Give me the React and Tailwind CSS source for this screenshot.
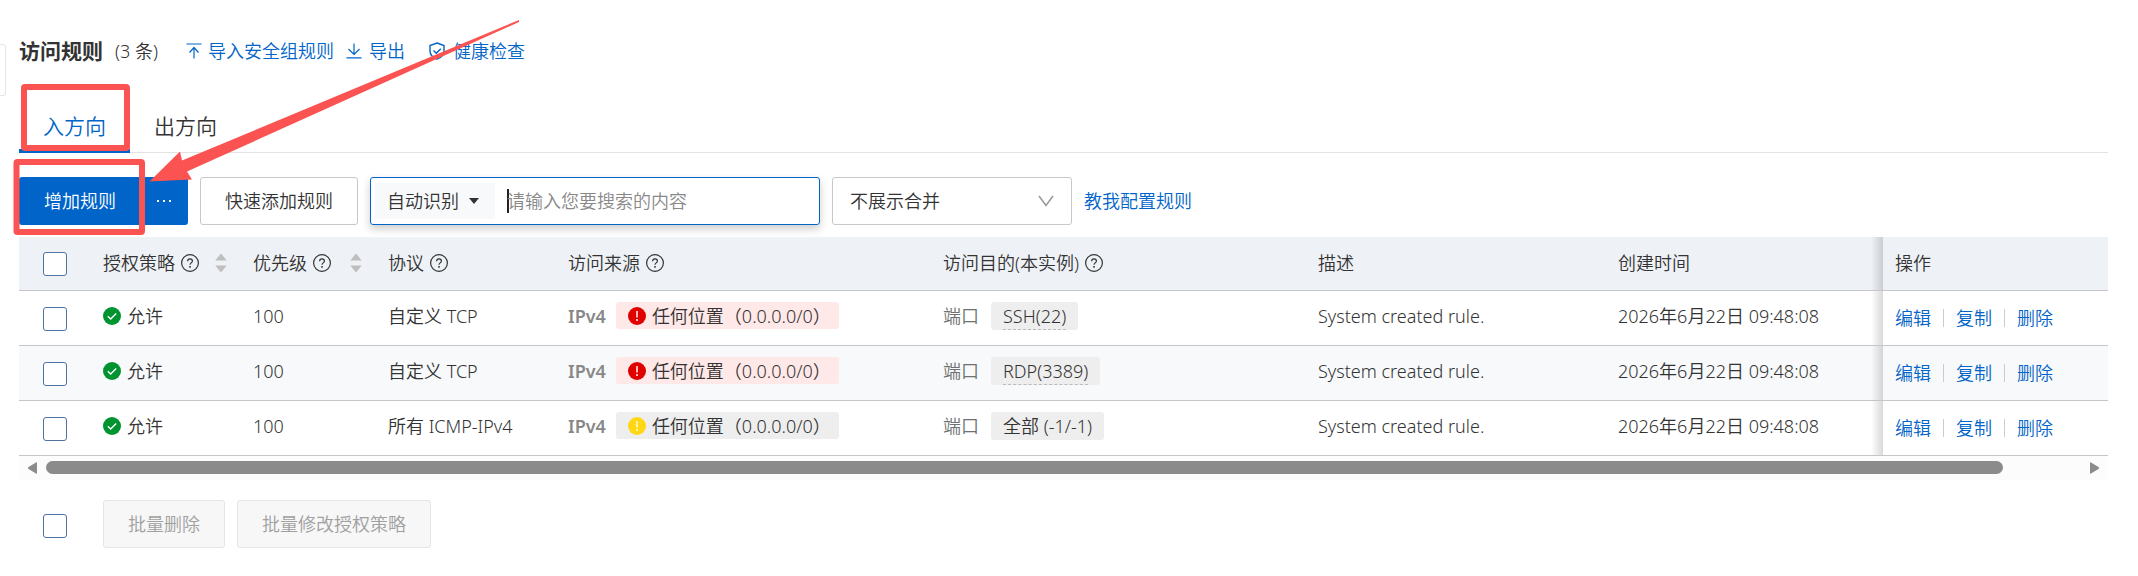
import React, { useState } from 'react';

const rules = [
  { id: 1, protocol: '自定义 TCP', level: 'danger', port: 'SSH(22)', hint: true },
  { id: 2, protocol: '自定义 TCP', level: 'danger', port: 'RDP(3389)', hint: true },
  { id: 3, protocol: '所有 ICMP-IPv4', level: 'warning', port: '全部 (-1/-1)', hint: false },
];

const UploadIcon = () => (
  <svg className="w-4 h-4" viewBox="0 0 16 16" fill="none" stroke="currentColor" strokeWidth="1.2">
    <path d="M0.5 1h15M8 15.500V4.500M3.500 9.500L8 4.500l4.500 5" />
  </svg>
);

const DownloadIcon = () => (
  <svg className="w-4 h-4" viewBox="0 0 16 16" fill="none" stroke="currentColor" strokeWidth="1.2">
    <path d="M0.5 14.800h15M8 0.500v11M2.500 6l5.500 5.500L13.500 6" />
  </svg>
);

const ShieldIcon = () => (
  <svg className="w-4 h-[18px]" viewBox="0 0 16 18" fill="none" stroke="currentColor" strokeWidth="1.4">
    <path d="M8 1L15 3.500V9c0 3.800-2.800 6.600-7 8.200C3.800 15.600 1 12.800 1 9V3.500L8 1z" />
    <path d="M4.500 8.500l2.800 2.800 4.500-4.500" />
  </svg>
);

const HelpIcon = () => (
  <svg className="w-[18px] h-[18px]" viewBox="0 0 18 18" fill="none" stroke="currentColor" strokeWidth="1.2">
    <circle cx="9" cy="9" r="8.400" />
    <path d="M6.600 7.200c0-1.500 1-2.400 2.400-2.400s2.400 0.900 2.400 2.200c0 1.800-2.400 1.900-2.400 3.700" />
    <path d="M9 12v1.700" strokeWidth="1.500" />
  </svg>
);

const SortIcon = () => (
  <svg className="w-3 h-5" viewBox="0 0 12 20" fill="#bfbfbf">
    <path d="M6 0.500L11.800 7.500H0.200zM6 19.500L0.200 12.500h11.600z" />
  </svg>
);

const CheckIcon = () => (
  <svg className="w-[18px] h-[18px]" viewBox="0 0 18 18" fill="none">
    <circle cx="9" cy="9" r="9" fill="#009431" />
    <path d="M4.800 9.200l2.900 2.900 5.500-5.500" stroke="#fff" strokeWidth="1.400" />
  </svg>
);

const AlertIcon = ({ level }) => (
  <svg className="w-[18px] h-[18px]" viewBox="0 0 18 18">
    <circle cx="9" cy="9" r="9" fill={level === 'danger' ? '#e00000' : '#ffd715'} />
    <path d="M8 4h2v6.500H8zM8 12h2v2H8z" fill={level === 'danger' ? '#ffb8b8' : '#fff1a8'} />
  </svg>
);

const Checkbox = ({ label }) => (
  <input
    type="checkbox"
    aria-label={label}
    className="block w-6 h-6 appearance-none rounded-[3px] border border-[#4f73a0] bg-white checked:bg-[#0064c8]"
  />
);

const HeadCell = ({ children, help, sort }) => (
  <th className="px-3 font-[350] text-left">
    <div className="flex items-center whitespace-nowrap">
      <span>{children}</span>
      {help && (
        <span className="ml-1.5">
          <HelpIcon />
        </span>
      )}
      {sort && (
        <button type="button" aria-label="排序" className="ml-auto mr-0.5">
          <SortIcon />
        </button>
      )}
    </div>
  </th>
);

const Header = () => (
  <div className="flex items-center h-6 text-[#0064c8]">
    <h2 className="text-[21px] font-bold text-[#333]">访问规则</h2>
    <span className="ml-3 text-[#333]">(3 条)</span>
    <a href="#import" className="ml-7 flex items-center gap-1.5">
      <UploadIcon />
      导入安全组规则
    </a>
    <a href="#export" className="ml-3 flex items-center gap-1.5">
      <DownloadIcon />
      <span className="pl-px">导出</span>
    </a>
    <a href="#health" className="ml-6 flex items-center gap-2">
      <ShieldIcon />
      健康检查
    </a>
  </div>
);

const Tabs = ({ active, onChange }) => (
  <div role="tablist" className="mt-9 flex border-b border-[#e3e3e3] text-[21px]">
    {['入方向', '出方向'].map((name) => (
      <button
        key={name}
        type="button"
        role="tab"
        aria-selected={active === name}
        onClick={() => onChange(name)}
        className={
          active === name
            ? '-mb-px h-[54px] px-6 pt-1 border-b-4 border-[#0064c8] text-[#0064c8]'
            : '-mb-px h-[54px] px-6 pt-1 border-b-4 border-transparent text-[#333]'
        }
      >
        {name}
      </button>
    ))}
  </div>
);

const Toolbar = () => (
  <div className="mt-6 flex items-center gap-3">
    <div className="flex h-12 rounded-[3px] bg-[#0064c8] text-white">
      <button type="button" className="pl-[25px] pr-6">
        增加规则
      </button>
      <button type="button" aria-label="更多" className="w-12 flex items-center justify-center">
        <svg className="w-4 h-1" viewBox="0 0 16 4" fill="currentColor">
          <path d="M1 1h2v2H1zM7 1h2v2H7zM13 1h2v2h-2z" />
        </svg>
      </button>
    </div>
    <button type="button" className="h-12 px-6 rounded-[3px] border border-[#c8c8c8]">
      快速添加规则
    </button>
    <div className="flex items-center w-[450px] h-12 p-1 rounded-[3px] border border-[#0064c8] shadow-[0_4px_8px_rgba(0,0,0,0.2)]">
      <button type="button" className="flex items-center justify-between w-[120px] h-9 pl-3 pr-4 bg-[#f7f9fb]">
        自动识别
        <svg className="w-2.5 h-1.5" viewBox="0 0 10 6" fill="#333">
          <path d="M0 0h10L5 6z" />
        </svg>
      </button>
      <span className="ml-3 -mr-0.5 w-0.5 h-6 bg-[#222]" />
      <input
        type="text"
        aria-label="搜索"
        placeholder="请输入您要搜索的内容"
        className="grow min-w-0 outline-none placeholder:text-[#888]"
      />
    </div>
    <div className="relative">
      <select aria-label="合并展示" className="block w-60 h-12 pl-[17px] appearance-none rounded-[3px] border border-[#c8c8c8] bg-white">
        <option>不展示合并</option>
      </select>
      <svg className="absolute right-[18px] top-[18px] w-4 h-3 pointer-events-none" viewBox="0 0 16 12" fill="none" stroke="#999" strokeWidth="1.500">
        <path d="M1 1l7 9.500L15 1" />
      </svg>
    </div>
    <a href="#help" className="text-[#0064c8]">
      教我配置规则
    </a>
  </div>
);

const RuleRow = ({ rule }) => (
  <tr className="h-[55px] border-b border-[#c6c6c6] even:bg-[#f7f9fb]">
    <td className="pt-0.5 pl-6">
      <Checkbox label="选择规则" />
    </td>
    <td className="px-3 pb-1">
      <div className="flex items-center gap-1.5">
        <CheckIcon />
        允许
      </div>
    </td>
    <td className="px-3 pb-1">100</td>
    <td className="px-3 pb-1">{rule.protocol}</td>
    <td className="px-3 pb-1">
      <div className="flex items-center gap-2.5">
        <span className="font-semibold text-[#888]">IPv4</span>
        <span
          className={
            rule.level === 'danger'
              ? 'flex items-center gap-1.5 h-[27px] pl-3 pr-2 rounded-[3px] bg-[#ffe8e8]'
              : 'flex items-center gap-1.5 h-[27px] pl-3 pr-2 rounded-[3px] bg-[#eee]'
          }
        >
          <AlertIcon level={rule.level} />
          任何位置（0.0.0.0/0）
        </span>
      </div>
    </td>
    <td className="px-3 pb-1">
      <div className="flex items-center gap-3">
        <span className="text-[#707070]">端口</span>
        <span className="h-7 px-3 rounded-[3px] bg-[#eee]">
          <span className={rule.hint ? 'block h-7 leading-7 border-b border-dashed border-[#bbb]' : 'block h-7 leading-7'}>
            {rule.port}
          </span>
        </span>
      </div>
    </td>
    <td className="px-3 pb-1">System created rule.</td>
    <td className="px-3 pb-1">2026年6月22日 09:48:08</td>
    <td className="relative px-3">
      <div className="absolute inset-y-0 right-full w-3 bg-linear-to-l from-black/15 to-transparent" />
      <div className="flex items-center gap-3 text-[#0064c8]">
        <a href="#edit">编辑</a>
        <span className="w-px h-[18px] bg-[#ccc]" />
        <a href="#copy">复制</a>
        <span className="w-px h-[18px] bg-[#ccc]" />
        <a href="#delete">删除</a>
      </div>
    </td>
  </tr>
);

const RuleTable = () => (
  <table className="mt-3 w-full table-fixed border-collapse">
    <colgroup>
      <col className="w-[72px]" />
      <col className="w-[150px]" />
      <col className="w-[135px]" />
      <col className="w-[180px]" />
      <col className="w-[375px]" />
      <col className="w-[375px]" />
      <col className="w-[300px]" />
      <col />
      <col className="w-[225px]" />
    </colgroup>
    <thead>
      <tr className="h-[53px] border-b border-[#c6c6c6] bg-[#eef1f6]">
        <th className="pt-0.5 pl-6">
          <Checkbox label="全选" />
        </th>
        <HeadCell help sort>授权策略</HeadCell>
        <HeadCell help sort>优先级</HeadCell>
        <HeadCell help>协议</HeadCell>
        <HeadCell help>访问来源</HeadCell>
        <HeadCell help>访问目的(本实例)</HeadCell>
        <HeadCell>描述</HeadCell>
        <HeadCell>创建时间</HeadCell>
        <th className="relative px-3 font-[350] text-left">
          <div className="absolute inset-y-0 right-full w-3 bg-linear-to-l from-black/15 to-transparent" />
          操作
        </th>
      </tr>
    </thead>
    <tbody>
      {rules.map((rule) => (
        <RuleRow key={rule.id} rule={rule} />
      ))}
    </tbody>
  </table>
);

const ScrollBar = () => (
  <div className="flex items-center h-6 px-[9px] bg-[#fcfcfc]">
    <svg className="w-[9px] h-3" viewBox="0 0 9 12" fill="#8b8b8b">
      <path d="M9 1v10q0 1-1 0.500L0.500 7q-1-1 0-2L8 0.500q1-0.500 1 0.500z" />
    </svg>
    <div className="grow mx-[9px] pr-[78px]">
      <div className="h-[13px] rounded-full bg-[#8b8b8b]" />
    </div>
    <svg className="w-[9px] h-3" viewBox="0 0 9 12" fill="#8b8b8b">
      <path d="M0 1v10q0 1 1 0.500L8.500 7q1-1 0-2L1 0.500q-1-0.500-1 0.500z" />
    </svg>
  </div>
);

// red boxes and arrow drawn over the page
const Annotations = () => (
  <svg className="absolute left-0 top-0 w-[540px] h-60 pointer-events-none" viewBox="0 0 540 240" fill="none">
    <rect x="24" y="87" width="103" height="61" rx="1" stroke="#fb5252" strokeWidth="6" />
    <rect x="16.500" y="162" width="125.500" height="70" rx="1" stroke="#fb5252" strokeWidth="6" />
    <path d="M519 20L182 160.500 180 151.500 149.500 181.500 192 179.500 187 171.500 519 22z" fill="#fb5252" />
  </svg>
);

const App = () => {
  const [tab, setTab] = useState('入方向');

  return (
    <div className="relative pt-[39px] pl-[19px] pr-[30px] bg-white text-[#333] text-[18px] leading-6 font-[350] font-['Noto_Sans','Noto_Sans_CJK_SC',sans-serif]">
      <div className="absolute left-0 top-11 w-1.5 h-[52px] rounded-r-[3px] border border-l-0 border-[#e5e5e5]" />
      <Header />
      <Tabs active={tab} onChange={setTab} />
      <Toolbar />
      <RuleTable />
      <ScrollBar />
      <div className="mt-5 flex items-center pl-6">
        <div className="pt-1">
          <Checkbox label="批量选择" />
        </div>
        <button type="button" disabled className="ml-9 h-12 px-6 rounded-[3px] border border-[#e5e5e5] bg-[#f7f7f7] text-[#a0a0a0]">
          批量删除
        </button>
        <button type="button" disabled className="ml-3 h-12 px-6 rounded-[3px] border border-[#e5e5e5] bg-[#f7f7f7] text-[#a0a0a0]">
          批量修改授权策略
        </button>
      </div>
      <Annotations />
    </div>
  );
};

export default App;
